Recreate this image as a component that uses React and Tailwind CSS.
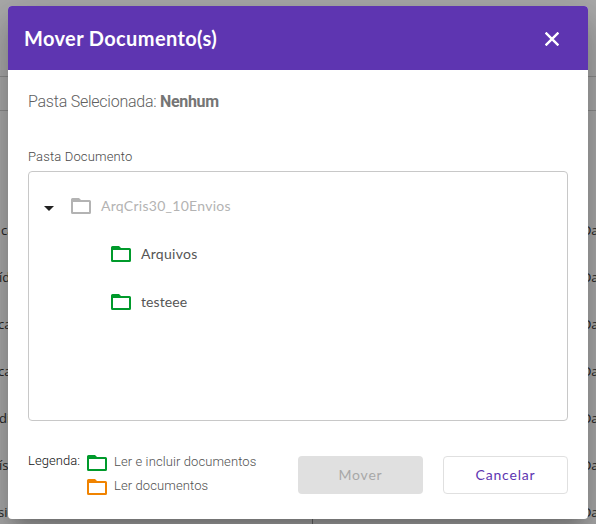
const leftCells = ['ca', 'íd', 'ca', 'ca', 'di', 'ís', 'sid'];
const leftOffsets = ['pl-[1px]', '-ml-px', '-ml-0.5', '-ml-0.5', '-ml-px', '-ml-px', '-ml-0.5'];

function Folder({ className }) {
  return (
    <svg viewBox="0 0 20 16" className={`h-4 w-5 shrink-0 ${className}`} fill="currentColor">
      <path
        fillRule="evenodd"
        d="M1.5 0H8l2 2h8.5A1.5 1.5 0 0 1 20 3.5v11a1.5 1.5 0 0 1-1.5 1.5h-17A1.5 1.5 0 0 1 0 14.5v-13A1.5 1.5 0 0 1 1.5 0ZM2 4v10h16V4Z"
      />
    </svg>
  );
}

function Backdrop() {
  return (
    <div className="flex h-full flex-col bg-[#aaaaaa] font-['Open_Sans',sans-serif] text-[13px] text-[#252525]">
      <div className="h-[77px] shrink-0 border-b border-[#8c8c8c]" />
      <div className="h-[34px] shrink-0 border-b border-[#8c8c8c]" />
      <div className="h-[96px] shrink-0" />
      {leftCells.map((cell, i) => (
        <div key={i} className="flex h-[47px] shrink-0 items-center justify-between">
          <span className={leftOffsets[i]}>{cell}</span>
          <span className="w-[14px] whitespace-nowrap tracking-[-0.3px]">Da</span>
        </div>
      ))}
    </div>
  );
}

export default function App() {
  return (
    <div className="relative h-[524px] w-[596px] overflow-hidden font-['Lato','Open_Sans',sans-serif]">
      <Backdrop />
      <div className="absolute top-[519px] left-[312px] h-[5px] w-px bg-[#686868]" />
      <div
        role="dialog"
        className="absolute top-[6px] left-2 flex h-[513px] w-[580px] flex-col overflow-hidden rounded bg-white shadow-[0_11px_15px_-7px_rgba(0,0,0,0.2),0_24px_38px_3px_rgba(0,0,0,0.14),0_9px_46px_8px_rgba(0,0,0,0.12)]"
      >
        <header className="flex h-16 shrink-0 items-center justify-between bg-[#5e35b1] pr-[29px] pl-4 text-white">
          <h1 className="text-[20px] leading-6 font-bold tracking-[0.37px] whitespace-nowrap">Mover Documento(s)</h1>
          <button aria-label="Fechar">
            <svg viewBox="0 0 14 14" className="mt-[2px] h-[14px] w-[14px]" stroke="currentColor" strokeWidth="2.4">
              <path d="M0.6 0.6l12.8 12.8M13.4 0.6L0.6 13.4" />
            </svg>
          </button>
        </header>
        <main className="flex flex-1 flex-col px-5">
          <p className="mt-5 h-6 font-['Roboto',sans-serif] text-[16px] leading-6 font-light tracking-[-0.24px] whitespace-nowrap text-[#606060]">
            Pasta Selecionada: <b className="font-bold tracking-[-0.35px] text-[#757575]">Nenhum</b>
          </p>
          <p className="mt-[33px] h-5 font-['Roboto',sans-serif] text-[13px] leading-5 font-light tracking-[0.15px] whitespace-nowrap text-[#484848]">
            Pasta Documento
          </p>
          <ul className="mt-1 flex h-[250px] flex-col rounded border border-[#c8c8c8] pt-[10px] text-[14px] tracking-[0.28px] text-[#555555]">
            <li className="flex h-12 items-center pl-[15px] text-[#b3b3b3]">
              <svg viewBox="0 0 10 5" className="mt-1 mr-[17px] h-[5px] w-[10px]">
                <path d="M0 0h10L5 5z" fill="#212121" />
              </svg>
              <Folder />
              <span className="mb-[2px] ml-[10px]">ArqCris30_10Envios</span>
            </li>
            <li className="flex h-12 items-center pl-[82px]">
              <Folder className="text-[#009a2b]" />
              <span className="mb-[2px] ml-[10px]">Arquivos</span>
            </li>
            <li className="flex h-12 items-center pl-[82px]">
              <Folder className="text-[#009a2b]" />
              <span className="mb-[2px] ml-[10px] tracking-[0.1px]">testeee</span>
            </li>
          </ul>
          <footer className="mt-[29px] flex font-['Roboto',sans-serif] text-[13px] font-light tracking-[0.1px] whitespace-nowrap">
            <span className="mt-[1px] w-[59px] leading-5 tracking-[0.05px] text-[#111111]">Legenda:</span>
            <div className="flex w-[211px] flex-col text-[#505050]">
              <div className="flex h-6 items-center">
                <Folder className="mt-[2px] text-[#009a2b]" />
                <span className="ml-[7px]">Ler e incluir documentos</span>
              </div>
              <div className="flex h-6 items-center">
                <Folder className="mt-[2px] text-[#f08300]" />
                <span className="ml-[7px]">Ler documentos</span>
              </div>
            </div>
            <div className="mt-[6px] flex gap-5 font-['Lato',sans-serif] text-[14px] font-normal tracking-[0.8px]">
              <button disabled className="h-[38px] w-[125px] rounded bg-[#e0e0e0] pb-[2px] text-[#a8a8a8]">Mover</button>
              <button className="h-[38px] w-[125px] rounded border border-[#e0e0e0] pb-[2px] text-[#5e35b1]">Cancelar</button>
            </div>
          </footer>
        </main>
      </div>
    </div>
  );
}
